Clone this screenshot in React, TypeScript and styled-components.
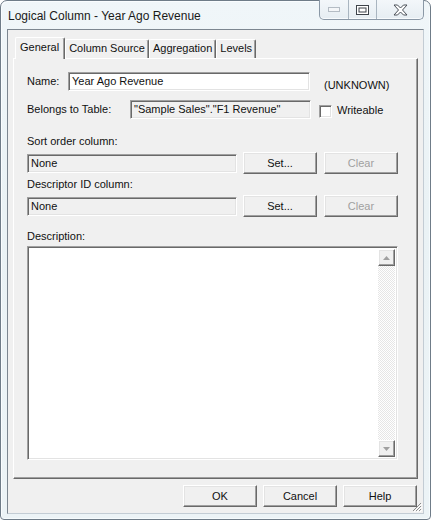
import styled, { createGlobalStyle } from "styled-components";

const GlobalStyle = createGlobalStyle`
    html, body {
        margin: 0;
        padding: 0;
        background: #ffffff;
    }
    body {
        font-family: "Liberation Sans", Arial, sans-serif;
        font-size: 11px;
        color: #111;
    }
`

const raised = `
    border: 1px solid;
    border-color: #ffffff #696969 #696969 #ffffff;
    box-shadow: inset -1px -1px #a0a0a0, inset 1px 1px #e3e3e3;
`

const sunken = `
    border: 1px solid;
    border-color: #a0a0a0 #ffffff #ffffff #a0a0a0;
    box-shadow: inset 1px 1px #696969, inset -1px -1px #e3e3e3;
`

const App = () => {
    return (
        <>
            <GlobalStyle />
            <Window>
                <TitleBar>
                    <Title>Logical Column - Year Ago Revenue</Title>
                    <Controls>
                        <CtrlButton $w={28}>
                            <svg width="12" height="5" viewBox="0 0 12 5">
                                <rect x="0.5" y="0.5" width="11" height="4" fill="#f4f6f8" stroke="#b4bcc4" />
                            </svg>
                        </CtrlButton>
                        <CtrlButton $w={27} $divider>
                            <svg width="13" height="10" viewBox="0 0 13 10">
                                <rect x="0.5" y="0.5" width="12" height="9" fill="#ffffff" stroke="#3d434a" />
                                <rect x="3" y="3" width="7" height="4" fill="#ffffff" stroke="#3d434a" strokeWidth="1" />
                            </svg>
                        </CtrlButton>
                        <CtrlButton $w={46} $divider>
                            <svg width="15" height="12" viewBox="0 0 15 12">
                                <path
                                    d="M1 1 L4.5 1 L7.5 4 L10.5 1 L14 1 L9.5 6 L14 11 L10.5 11 L7.5 8 L4.5 11 L1 11 L5.5 6 Z"
                                    fill="#ffffff"
                                    stroke="#4a5058"
                                    strokeWidth="1"
                                    strokeLinejoin="round"
                                />
                            </svg>
                        </CtrlButton>
                    </Controls>
                </TitleBar>

                <Client>
                    <TabStrip>
                        <Tab $active>General</Tab>
                        <Tab>Column Source</Tab>
                        <Tab>Aggregation</Tab>
                        <Tab>Levels</Tab>
                    </TabStrip>

                    <Panel>
                        <FieldRow>
                            <Label $w={41}>Name:</Label>
                            <TextBox $w={242}>Year Ago Revenue</TextBox>
                            <Note>(UNKNOWN)</Note>
                        </FieldRow>

                        <FieldRow $top={8}>
                            <Label $w={103}>Belongs to Table:</Label>
                            <TextBox $w={181} $gray>"Sample Sales"."F1 Revenue"</TextBox>
                            <CheckBox />
                            <CheckLabel>Writeable</CheckLabel>
                        </FieldRow>

                        <Caption $top={15}>Sort order column:</Caption>
                        <ButtonRow>
                            <TextBox $w={210} $gray>None</TextBox>
                            <Button>Set...</Button>
                            <Button disabled>Clear</Button>
                        </ButtonRow>

                        <Caption $top={3}>Descriptor ID column:</Caption>
                        <ButtonRow>
                            <TextBox $w={210} $gray>None</TextBox>
                            <Button>Set...</Button>
                            <Button disabled>Clear</Button>
                        </ButtonRow>

                        <Caption $top={12}>Description:</Caption>
                        <Memo>
                            <MemoText />
                            <ScrollBar>
                                <ScrollArrow>
                                    <svg width="7" height="4" viewBox="0 0 7 4">
                                        <path d="M0 4 L3.5 0 L7 4 Z" fill="#a0a0a0" />
                                    </svg>
                                </ScrollArrow>
                                <Track />
                                <ScrollArrow>
                                    <svg width="7" height="4" viewBox="0 0 7 4">
                                        <path d="M0 0 L7 0 L3.5 4 Z" fill="#a0a0a0" />
                                    </svg>
                                </ScrollArrow>
                            </ScrollBar>
                        </Memo>
                    </Panel>

                    <Footer>
                        <Button>OK</Button>
                        <Button>Cancel</Button>
                        <Button>Help</Button>
                    </Footer>

                    <Grip>
                        <svg width="10" height="10" viewBox="0 0 10 10">
                            <path d="M9 1 L1 9 M9 4 L4 9 M9 7 L7 9" stroke="#8c8c8c" strokeWidth="1" />
                            <path d="M10 2 L2 10 M10 5 L5 10 M10 8 L8 10" stroke="#ffffff" strokeWidth="1" />
                        </svg>
                    </Grip>
                </Client>
            </Window>
        </>
    )
}

export default App;

const Window = styled.div`
    box-sizing: border-box;
    width: 431px;
    height: 520px;
    display: flex;
    flex-direction: column;
    padding: 0 6px 5px 6px;
    border: 1px solid #6f7c88;
    border-radius: 7px 7px 4px 4px;
    background: linear-gradient(180deg, #f0f6f9 0%, #eaf2f5 40%, #ecf3f6 100%);
    box-shadow: inset 1px 1px #fafdff, inset -1px -1px #f6fbfd;
`

const TitleBar = styled.div`
    height: 29px;
    display: flex;
    justify-content: space-between;
    align-items: flex-start;
`

const Title = styled.div`
    padding: 8px 0 0 1px;
    font-size: 12px;
    color: #1a1a1a;
    white-space: nowrap;
`

const Controls = styled.div`
    display: flex;
    height: 19px;
    margin-top: -1px;
    border: 1px solid #8a98a6;
    border-top: none;
    border-radius: 0 0 5px 5px;
    background: linear-gradient(180deg, #f3f7fa 0%, #e6edf2 100%);
    box-shadow: inset 0 -1px #f8fbfd;
`

const CtrlButton = styled.div<{ $w: number; $divider?: boolean }>`
    width: ${p => p.$w}px;
    display: flex;
    align-items: center;
    justify-content: center;
    border-left: ${p => (p.$divider ? "1px solid #a9b5c0" : "none")};
`

const Client = styled.div`
    position: relative;
    flex: 1;
    display: flex;
    flex-direction: column;
    padding: 7px 5px 6px 5px;
    border: 1px solid;
    border-color: #7c8690 #c3ccd4 #c3ccd4 #7c8690;
    background: #f0f0f0;
`

const TabStrip = styled.div`
    display: flex;
    align-items: flex-end;
    height: 21px;
    padding-left: 2px;
    position: relative;
    z-index: 1;
`

const Tab = styled.div<{ $active?: boolean }>`
    box-sizing: border-box;
    height: ${p => (p.$active ? 22 : 19)}px;
    margin-bottom: ${p => (p.$active ? -1 : 0)}px;
    padding: ${p => (p.$active ? "3px 5px 0 4px" : "2px 3px 0 3px")};
    background: #f0f0f0;
    border-top: 1px solid #ffffff;
    border-left: 1px solid #ffffff;
    border-right: 1px solid #696969;
    border-radius: 2px 2px 0 0;
    box-shadow: inset -1px 0 #a0a0a0;
    white-space: nowrap;
    color: #111;
`

const Panel = styled.div`
    box-sizing: border-box;
    height: 421px;
    display: flex;
    flex-direction: column;
    padding: 12px 19px 0 13px;
    ${raised}
    box-shadow: inset -1px -1px #a0a0a0;
`

const FieldRow = styled.div<{ $top?: number }>`
    display: flex;
    align-items: center;
    height: 20px;
    margin-top: ${p => p.$top || 0}px;
`

const Label = styled.div<{ $w: number }>`
    width: ${p => p.$w}px;
    flex-shrink: 0;
    white-space: nowrap;
`

const TextBox = styled.div<{ $w: number; $gray?: boolean }>`
    box-sizing: border-box;
    width: ${p => p.$w}px;
    height: 19px;
    display: flex;
    align-items: center;
    padding: 0 3px;
    flex-shrink: 0;
    white-space: nowrap;
    overflow: hidden;
    background: ${p => (p.$gray ? "#f0f0f0" : "#ffffff")};
    ${sunken}
`

const Note = styled.div`
    margin: 8px 0 0 14px;
    white-space: nowrap;
`

const CheckBox = styled.div`
    box-sizing: border-box;
    width: 13px;
    height: 13px;
    margin: 4px 0 0 8px;
    background: #ffffff;
    ${sunken}
`

const CheckLabel = styled.div`
    margin: 1px 0 0 5px;
    white-space: nowrap;
`

const Caption = styled.div<{ $top: number }>`
    height: 14px;
    line-height: 14px;
    margin-top: ${p => p.$top}px;
    white-space: nowrap;
`

const ButtonRow = styled.div`
    display: flex;
    align-items: center;
    gap: 6px;
    height: 22px;
    margin-top: 4px;

    & > button:last-child {
        margin-left: 1px;
    }
`

const Button = styled.button`
    box-sizing: border-box;
    width: 74px;
    height: 22px;
    padding: 0;
    flex-shrink: 0;
    font-family: "Liberation Sans", Arial, sans-serif;
    font-size: 11px;
    color: #111;
    background: #f0f0f0;
    ${raised}

    &:disabled {
        color: #a0a0a0;
    }
`

const Memo = styled.div`
    box-sizing: border-box;
    display: flex;
    height: 214px;
    margin-top: 3px;
    padding: 2px;
    background: #ffffff;
    ${sunken}
`

const MemoText = styled.div`
    flex: 1;
`

const ScrollBar = styled.div`
    width: 17px;
    display: flex;
    flex-direction: column;
`

const ScrollArrow = styled.div`
    box-sizing: border-box;
    height: 17px;
    display: flex;
    align-items: center;
    justify-content: center;
    background: #f0f0f0;
    ${raised}
`

const Track = styled.div`
    flex: 1;
    background: repeating-conic-gradient(#ffffff 0 25%, #e6e6e6 0 50%) 0 0 / 2px 2px;
`

const Footer = styled.div`
    display: flex;
    justify-content: flex-end;
    gap: 6px;
    margin-top: 6px;
    padding-right: 1px;
`

const Grip = styled.div`
    position: absolute;
    right: 1px;
    bottom: 1px;
    width: 10px;
    height: 10px;
    line-height: 0;
`
